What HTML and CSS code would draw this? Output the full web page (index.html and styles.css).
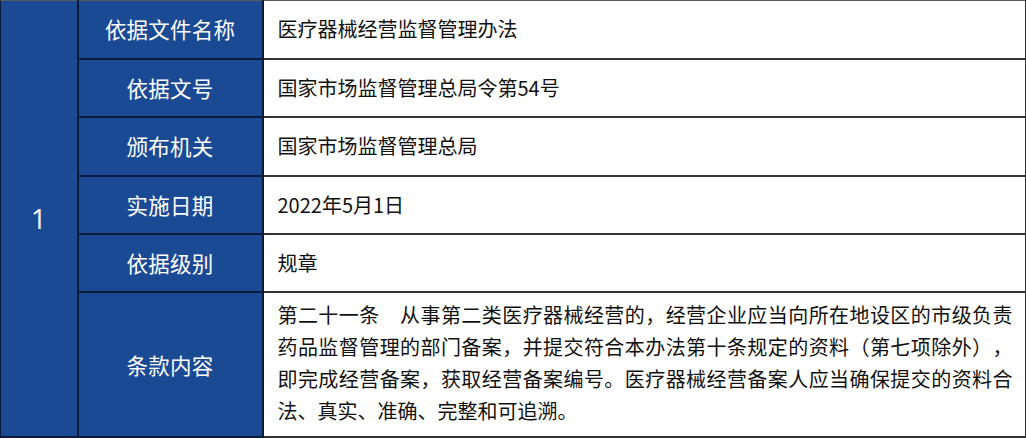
FILE: index.html
```html
<!DOCTYPE html>
<html lang="zh-CN">
<head>
<meta charset="utf-8">
<title>依据</title>
<link rel="stylesheet" href="styles.css">
</head>
<body>
<table class="basis">
  <colgroup>
    <col class="c-num">
    <col class="c-label">
    <col class="c-value">
  </colgroup>
  <tbody>
    <tr class="row">
      <td class="num" rowspan="6">1</td>
      <th class="label">依据文件名称</th>
      <td class="value">医疗器械经营监督管理办法</td>
    </tr>
    <tr class="row">
      <th class="label">依据文号</th>
      <td class="value">国家市场监督管理总局令第54号</td>
    </tr>
    <tr class="row">
      <th class="label">颁布机关</th>
      <td class="value">国家市场监督管理总局</td>
    </tr>
    <tr class="row">
      <th class="label">实施日期</th>
      <td class="value">2022年5月1日</td>
    </tr>
    <tr class="row">
      <th class="label">依据级别</th>
      <td class="value">规章</td>
    </tr>
    <tr class="row-tall">
      <th class="label">条款内容</th>
      <td class="value long">第二十一条　从事第二类医疗器械经营的，经营企业应当向所在地设区的市级负责药品监督管理的部门备案，并提交符合本办法第十条规定的资料（第七项除外），即完成经营备案，获取经营备案编号。医疗器械经营备案人应当确保提交的资料合法、真实、准确、完整和可追溯。</td>
    </tr>
  </tbody>
</table>
</body>
</html>
```

FILE: styles.css
```css
html, body {
  margin: 0;
  padding: 0;
  background: #ffffff;
}

body {
  font-family: "Noto Sans CJK SC", "Noto Sans", sans-serif;
}

.basis {
  border-collapse: collapse;
  table-layout: fixed;
  width: 1025px;
  border-top: 1px solid #5a5a5a;
  border-left: 1px solid #0b1a38;
}

.c-num { width: 77px; }
.c-label { width: 185px; }
.c-value { width: 763px; }

.row { height: 58.4px; }
.row-tall { height: 145px; }

.num,
.label {
  background: #1b4a95;
  color: #ffffff;
  font-weight: normal;
  text-align: center;
  vertical-align: middle;
  border: 2px solid #0b1a38;
  padding: 0;
}

.num {
  font-family: "Open Sans", "Noto Sans", sans-serif;
  font-size: 27px;
  border-left: 1px solid #0b1a38;
  border-top: 1px solid #5a5a5a;
}

.label {
  font-size: 21.5px;
  line-height: 30px;
  letter-spacing: 0.2px;
}

.value {
  color: #111111;
  font-size: 20px;
  line-height: 30px;
  padding: 0 12px 0 14px;
  vertical-align: middle;
  border: 2px solid #333333;
  background: #ffffff;
  text-spacing-trim: space-all;
  font-feature-settings: "halt" 0, "chws" 0;
}

.basis tr:first-child .label,
.basis tr:first-child .value {
  border-top: 1px solid #5a5a5a;
}

.long {
  line-height: 31.7px;
  text-align: justify;
  vertical-align: top;
  padding-top: 6px;
}
```
